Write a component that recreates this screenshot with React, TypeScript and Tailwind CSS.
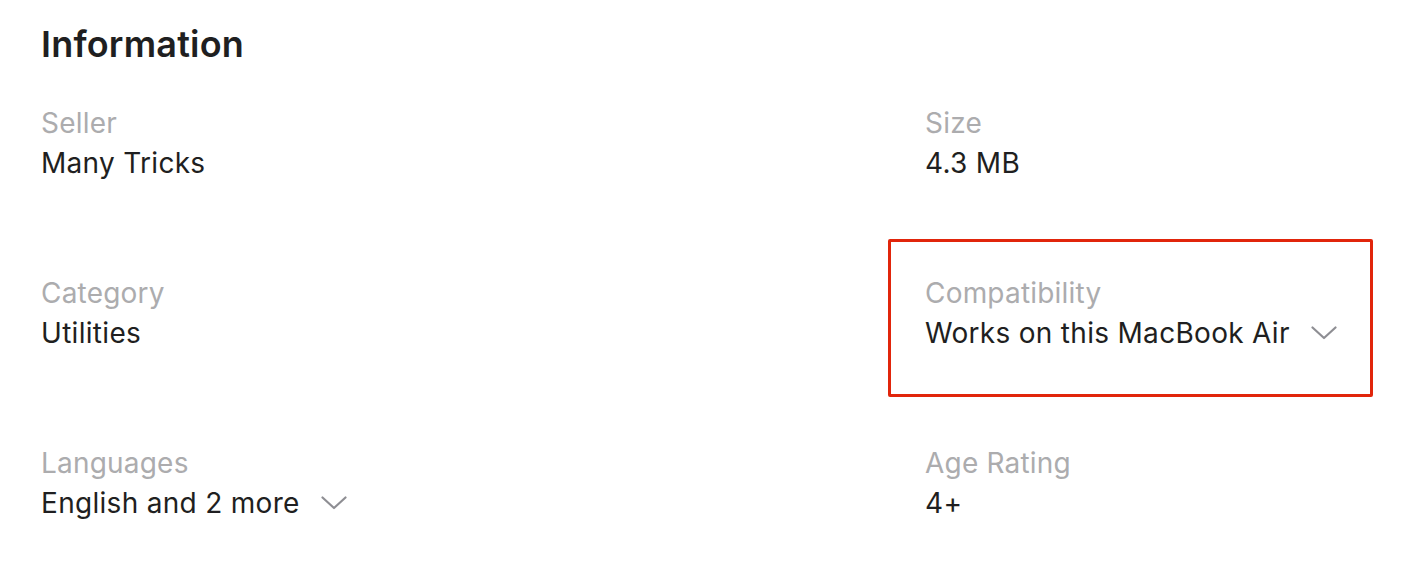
import { ReactNode } from 'react'

type Item = {
  label: string
  value: string
  expandable?: boolean
  highlighted?: boolean
}

const items: Item[] = [
  { label: 'Seller', value: 'Many Tricks' },
  { label: 'Size', value: '4.3 MB' },
  { label: 'Category', value: 'Utilities' },
  { label: 'Compatibility', value: 'Works on this MacBook Air', expandable: true, highlighted: true },
  { label: 'Languages', value: 'English and 2 more', expandable: true },
  { label: 'Age Rating', value: '4+' },
]

function Chevron() {
  return (
    <svg width="26" height="14" viewBox="0 0 26 14" fill="none" className="ml-[21px] shrink-0">
      <path d="M1.5 1.5 L13 12 L24.5 1.5" stroke="#8e8e93" strokeWidth="2.2" strokeLinecap="round" strokeLinejoin="round" />
    </svg>
  )
}

function Field({ item }: { item: Item }): ReactNode {
  return (
    <div className="relative h-[80px]">
      {item.highlighted && (
        <div className="absolute left-[-37px] top-[-34px] w-[485px] h-[158px] border-[3px] border-[#e1250b] rounded-[2px] pointer-events-none" />
      )}
      <p className="text-[28px] leading-[40px] tracking-[0.2px] text-[#acacae]">{item.label}</p>
      <div className="flex items-center">
        <p className="text-[28px] leading-[40px] tracking-[0.3px] text-[#1f1f21]">{item.value}</p>
        {item.expandable && <Chevron />}
      </div>
    </div>
  )
}

export default function App() {
  return (
    <div className="w-[1416px] h-[568px] bg-white pl-[41px] pt-[22px] font-['Inter','Liberation_Sans',sans-serif] overflow-hidden">
      <h2 className="text-[36px] leading-[44px] font-semibold text-[#1f1f21] tracking-[0.2px]">Information</h2>
      <div className="grid grid-cols-[884px_1fr] gap-y-[90px] mt-[37px]">
        {items.map(it => (
          <Field key={it.label} item={it} />
        ))}
      </div>
    </div>
  )
}
